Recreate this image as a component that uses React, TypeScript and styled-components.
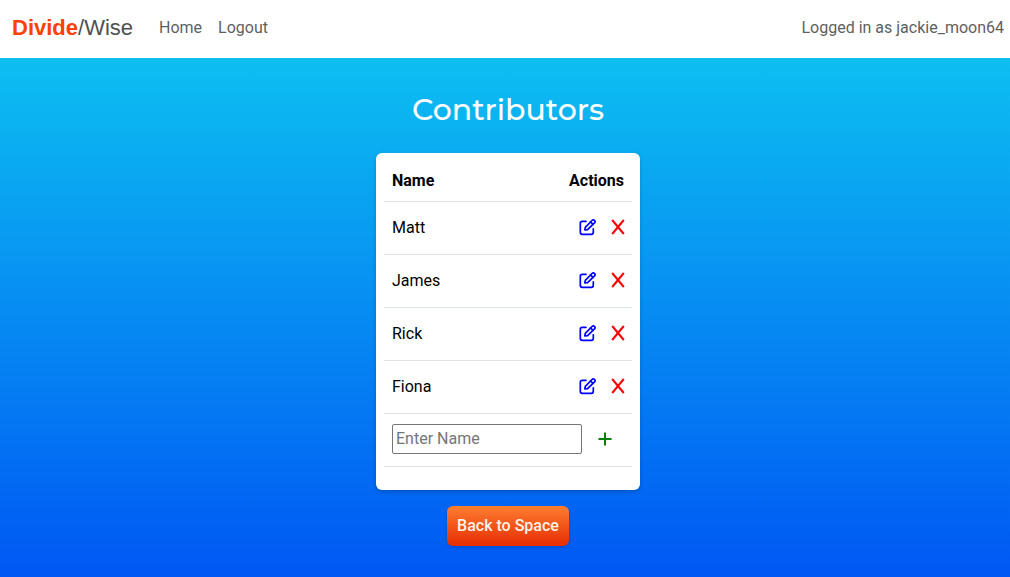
import React, { useState } from "react";
import styled, { createGlobalStyle } from "styled-components";

const GlobalStyle = createGlobalStyle`
  *, *::before, *::after { box-sizing: border-box; }
  body {
    margin: 0;
    font-family: Roboto, "Liberation Sans", sans-serif;
    font-size: 16px;
    line-height: 24px;
    color: #000;
  }
`;

const Page = styled.div`
  min-height: 100vh;
  display: flex;
  flex-direction: column;
`;

const Navbar = styled.nav`
  display: flex;
  align-items: center;
  height: 58px;
  padding: 0 6px 2px 12px;
  background: #fff;
`;

const Brand = styled.a`
  margin-right: 18px;
  font-family: "Liberation Sans", Arial, sans-serif;
  font-size: 22px;
  line-height: 32px;
  color: #4f4f4f;
  text-decoration: none;
`;

const BrandAccent = styled.strong`
  color: #ff4000;
`;

const NavLink = styled.a`
  padding: 8px;
  color: #5f5f5f;
  text-decoration: none;
`;

const UserLabel = styled.span`
  margin-left: auto;
  color: #5f5f5f;
`;

const Main = styled.main`
  flex: 1;
  display: flex;
  flex-direction: column;
  align-items: center;
  padding: 32px 0 31px 6px;
  background: linear-gradient(#0dbff1, #0057f4);
`;

const Title = styled.h1`
  margin: 0 0 24px;
  font-family: Montserrat, Inter, sans-serif;
  font-size: 30px;
  font-weight: 500;
  line-height: 39px;
  color: #fff;
`;

const Card = styled.section`
  width: 264px;
  margin-bottom: 16px;
  padding: 8px 8px 23px;
  background: #fff;
  border-radius: 6px;
  box-shadow: 0 2px 4px rgba(0, 0, 0, 0.2);
`;

const Table = styled.table`
  width: 100%;
  border-collapse: separate;
  border-spacing: 0;
`;

const HeadCell = styled.th<{ $end?: boolean }>`
  height: 41px;
  padding: 0 8px;
  border-bottom: 1px solid #dee2e6;
  font-weight: 700;
  text-align: ${(p) => (p.$end ? "right" : "left")};
`;

const Cell = styled.td<{ $actions?: boolean }>`
  height: 53px;
  padding: ${(p) => (p.$actions ? "0 7px 2px" : "0 8px")};
  border-bottom: 1px solid #dee2e6;
`;

const Actions = styled.div`
  display: flex;
  justify-content: flex-end;
  gap: 15px;
`;

const IconButton = styled.button<{ $color: string }>`
  display: flex;
  padding: 0;
  border: 0;
  background: none;
  color: ${(p) => p.$color};
  cursor: pointer;
`;

const AddForm = styled.form`
  display: flex;
  align-items: center;
  gap: 15px;
  padding-bottom: 2px;
`;

const NameInput = styled.input`
  width: 190px;
  height: 30px;
  padding: 1px 3px 3px;
  border: 1px solid #767676;
  border-radius: 2px;
  background: #fff;
  font: inherit;
  &::placeholder { color: #757575; opacity: 1; }
`;

const BackButton = styled.button`
  height: 40px;
  padding: 0 10px;
  border: 0;
  border-radius: 6px;
  background: linear-gradient(#ff7e31, #e62c03);
  box-shadow: 0 1px 3px rgba(0, 0, 0, 0.2);
  color: #fff4e9;
  font: inherit;
  font-weight: 500;
  cursor: pointer;
`;

const EditIcon = () => (
  <svg width="17" height="18" viewBox="0 0 17 18" fill="none" stroke="currentColor" strokeWidth="1.7" strokeLinecap="round" strokeLinejoin="round" aria-hidden="true">
    <path d="M7 3.300H3.300a2 2 0 0 0-2 2v9a2 2 0 0 0 2 2h9a2 2 0 0 0 2-2v-3.500" />
    <path d="M5.800 12l.5-2.600 6.700-6.900a1.700 1.700 0 0 1 2.500 2.400l-6.900 6.800z" />
    <path d="M11.500 3.900l2.500 2.400" />
  </svg>
);

const CrossIcon = () => (
  <svg width="14" height="18" viewBox="0 0 14 18" fill="none" stroke="currentColor" strokeWidth="2" aria-hidden="true">
    <path d="M1.200 2l11.600 14M12.800 2l-11.600 14" />
  </svg>
);

const PlusIcon = () => (
  <svg width="16" height="16" viewBox="0 0 16 16" fill="none" stroke="currentColor" strokeWidth="2" aria-hidden="true">
    <path d="M8 1.500v13M1.500 8h13" />
  </svg>
);

const contributors = ["Matt", "James", "Rick", "Fiona"];

export default function App() {
  const [name, setName] = useState("");
  return (
    <Page>
      <GlobalStyle />
      <Navbar>
        <Brand href="#"><BrandAccent>Divide</BrandAccent>/Wise</Brand>
        <NavLink href="#">Home</NavLink>
        <NavLink href="#">Logout</NavLink>
        <UserLabel>Logged in as jackie_moon64</UserLabel>
      </Navbar>
      <Main>
        <Title>Contributors</Title>
        <Card>
          <Table>
            <thead>
              <tr>
                <HeadCell scope="col">Name</HeadCell>
                <HeadCell scope="col" $end>Actions</HeadCell>
              </tr>
            </thead>
            <tbody>
              {contributors.map((person) => (
                <tr key={person}>
                  <Cell>{person}</Cell>
                  <Cell $actions>
                    <Actions>
                      <IconButton type="button" $color="#0000ff" aria-label={`Edit ${person}`}><EditIcon /></IconButton>
                      <IconButton type="button" $color="#ff0000" aria-label={`Remove ${person}`}><CrossIcon /></IconButton>
                    </Actions>
                  </Cell>
                </tr>
              ))}
              <tr>
                <Cell colSpan={2}>
                  <AddForm onSubmit={(e) => e.preventDefault()}>
                    <NameInput aria-label="Contributor name" placeholder="Enter Name" value={name} onChange={(e) => setName(e.target.value)} />
                    <IconButton type="submit" $color="#008000" aria-label="Add contributor"><PlusIcon /></IconButton>
                  </AddForm>
                </Cell>
              </tr>
            </tbody>
          </Table>
        </Card>
        <BackButton type="button">Back to Space</BackButton>
      </Main>
    </Page>
  );
}
